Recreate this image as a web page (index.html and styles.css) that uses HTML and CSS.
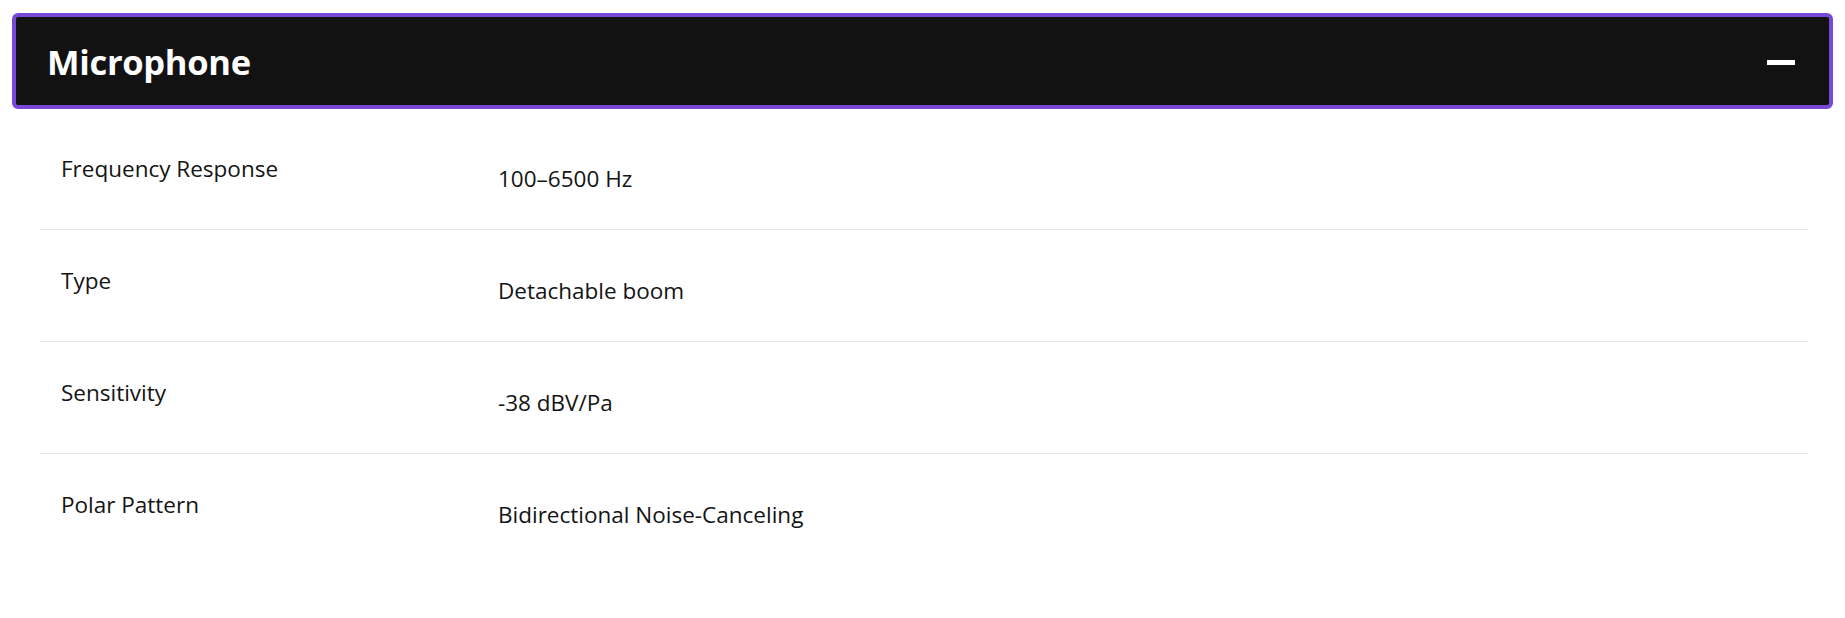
FILE: index.html
```html
<!DOCTYPE html>
<html lang="en">
<head>
<meta charset="utf-8">
<title>Microphone</title>
<link rel="stylesheet" href="styles.css">
</head>
<body>
<main class="page">
  <section class="accordion">
    <button class="acc-head" type="button" aria-expanded="true">
      <span class="acc-title">Microphone</span>
      <span class="acc-icon" aria-hidden="true"></span>
    </button>
    <dl class="specs">
      <div class="spec-row">
        <dt class="spec-label">Frequency Response</dt>
        <dd class="spec-value">100–6500 Hz</dd>
      </div>
      <div class="spec-row">
        <dt class="spec-label">Type</dt>
        <dd class="spec-value">Detachable boom</dd>
      </div>
      <div class="spec-row">
        <dt class="spec-label">Sensitivity</dt>
        <dd class="spec-value">-38 dBV/Pa</dd>
      </div>
      <div class="spec-row">
        <dt class="spec-label">Polar Pattern</dt>
        <dd class="spec-value">Bidirectional Noise-Canceling</dd>
      </div>
    </dl>
  </section>
</main>
</body>
</html>
```

FILE: styles.css
```css
* { box-sizing: border-box; }
html, body { margin: 0; padding: 0; background: #ffffff; }
body {
  font-family: "Open Sans", "Noto Sans", "Liberation Sans", sans-serif;
  color: #141414;
}
.page {
  padding: 13px 12px 0 12px;
}
.acc-head {
  display: flex;
  align-items: center;
  justify-content: space-between;
  width: 100%;
  height: 96px;
  margin: 0;
  padding: 0 34px 0 31px;
  background: #121212;
  border: 4px solid #7848d6;
  border-radius: 6px;
  color: #ffffff;
  font: inherit;
  cursor: pointer;
  text-align: left;
}
.acc-title {
  font-size: 34.5px;
  font-weight: 700;
  line-height: 1;
  letter-spacing: -0.3px;
  margin-top: 2px;
}
.acc-icon {
  display: block;
  width: 28px;
  height: 5px;
  background: #ffffff;
  margin-top: 2px;
}
.specs {
  margin: 9px 25px 0 28px;
  padding: 0;
}
.spec-row {
  display: grid;
  grid-template-columns: 458px 1fr;
  height: 112px;
  border-bottom: 1px solid #e6e6e6;
  font-size: 22.5px;
  line-height: 30px;
}
.spec-row:last-child { border-bottom: none; }
.spec-label {
  margin: 0;
  padding: 36px 0 0 21px;
}
.spec-value {
  margin: 0;
  padding-top: 46px;
}
```
